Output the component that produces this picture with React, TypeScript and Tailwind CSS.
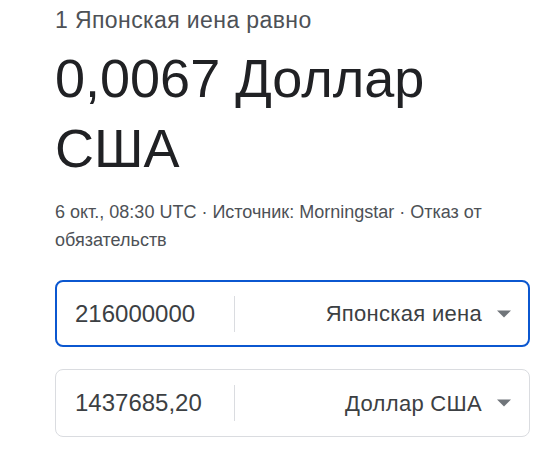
function CurrencyRow({ amount, currency, focused }: { amount: string; currency: string; focused?: boolean }) {
  return (
    <div
      className={
        focused
          ? "flex h-[67px] items-center rounded-lg border-2 border-[#0b57d0] pl-[18px] pr-[15px]"
          : "flex h-[68px] items-center rounded-lg border border-[#dadce0] pl-[19px] pr-[16px]"
      }
    >
      <div className="w-[159px] text-[24px] text-[#3c4043]">{amount}</div>
      <div className="h-[36px] w-px bg-[#dadce0]" />
      <div className="flex flex-1 items-center justify-end gap-[14px]">
        <span className="text-[22px] tracking-[0.3px] text-[#3c4043]">{currency}</span>
        <svg width="16" height="8" viewBox="0 0 16 8" className="mr-px">
          <path d="M1 0.5 L15 0.5 L8 7.5 Z" fill="#70757a" />
        </svg>
      </div>
    </div>
  );
}

export default function App() {
  return (
    <div className="h-[451px] w-[542px] bg-white pl-[55px] pr-[12px] pt-[6px] font-['Liberation_Sans',Arial,sans-serif]">
      <div className="text-[23px] leading-[28px] tracking-[0.4px] text-[#4d5156]">1 Японская иена равно</div>
      <div className="mt-[9px] text-[54px] leading-[70px] text-[#202124]">0,0067 Доллар США</div>
      <div className="mt-[15px] text-[18px] leading-[28px] text-[#4d5156]">
        6 окт., 08:30 UTC · Источник: Morningstar · Отказ от обязательств
      </div>
      <div className="mt-[26px] flex flex-col gap-[22px]">
        <CurrencyRow amount="216000000" currency="Японская иена" focused />
        <CurrencyRow amount="1437685,20" currency="Доллар США" />
      </div>
    </div>
  );
}
